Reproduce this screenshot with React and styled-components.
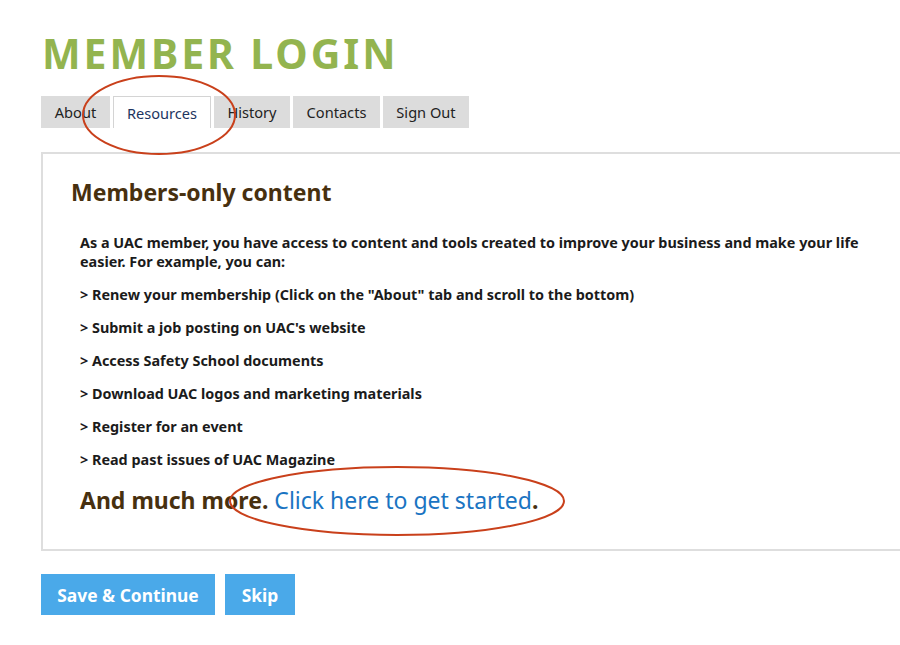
import React from 'react';
import styled, { createGlobalStyle } from 'styled-components';

const GlobalStyle = createGlobalStyle`
  html, body {
    margin: 0;
    padding: 0;
    background: #fff;
    overflow: hidden;
  }

  body {
    font-family: "Noto Sans", "Open Sans", sans-serif;
  }
`;

const Page = styled.div`
  position: relative;
  width: 900px;
  height: 645px;
  padding: 26px 0 0 41px;
  box-sizing: border-box;
  overflow: hidden;
`;

const Title = styled.h1`
  margin: 0 0 0 1px;
  font-size: 41px;
  line-height: 54px;
  font-weight: 700;
  letter-spacing: 2.9px;
  color: #93b44f;
`;

const Tabs = styled.ul`
  display: flex;
  align-items: flex-start;
  gap: 3px;
  list-style: none;
  margin: 16px 0 0;
  padding: 0;
`;

const Tab = styled.li`
  width: ${(p) => p.w}px;
  height: 32px;
  display: flex;
  align-items: center;
  justify-content: center;
  box-sizing: border-box;
  background: ${(p) => (p.active ? '#fff' : '#dcdcdc')};
  border: ${(p) => (p.active ? '1px solid #d4d4d4' : 'none')};
  border-bottom: none;
  font-size: 14.6px;
  color: ${(p) => (p.active ? '#1d3560' : '#222')};
`;

const Panel = styled.section`
  margin-top: 24px;
  width: 900px;
  height: 399px;
  border: 2px solid #dedede;
  border-right: none;
  box-sizing: border-box;
  padding: 22px 0 0 28px;
`;

const Heading = styled.h2`
  margin: 0;
  font-size: 23px;
  line-height: 32px;
  font-weight: 700;
  color: #47300f;
`;

const Body = styled.div`
  margin: 25px 0 0 9px;
  width: 800px;
  font-size: 14.4px;
  font-weight: 700;
  color: #1b1b1b;
`;

const Para = styled.p`
  margin: 0 0 14px;
  line-height: 19px;
`;

const More = styled.p`
  margin: 16px 0 0;
  font-size: 23px;
  line-height: 30px;
  font-weight: 700;
  color: #47300f;
`;

const Link = styled.a`
  font-weight: 400;
  color: #1a74c2;
  text-decoration: none;
`;

const Actions = styled.div`
  display: flex;
  gap: 10px;
  margin-top: 23px;
`;

const Button = styled.button`
  width: ${(p) => p.w}px;
  height: 41px;
  padding: 0;
  border: none;
  background: #4aa9e9;
  color: #fff;
  font-family: "Noto Sans", "Open Sans", sans-serif;
  font-size: 17.4px;
  font-weight: 700;
`;

const Marks = styled.svg`
  position: absolute;
  left: 0;
  top: 0;
  pointer-events: none;
`;

const tabs = [
  { label: 'About', w: 69 },
  { label: 'Resources', w: 98, active: true },
  { label: 'History', w: 76 },
  { label: 'Contacts', w: 87 },
  { label: 'Sign Out', w: 86 },
];

const items = [
  '> Renew your membership (Click on the "About" tab and scroll to the bottom)',
  "> Submit a job posting on UAC's website",
  '> Access Safety School documents',
  '> Download UAC logos and marketing materials',
  '> Register for an event',
  '> Read past issues of UAC Magazine',
];

const App = () => (
  <Page>
    <GlobalStyle />
    <Title>MEMBER LOGIN</Title>
    <Tabs>
      {tabs.map((t) => (
        <Tab key={t.label} w={t.w} active={t.active}>
          {t.label}
        </Tab>
      ))}
    </Tabs>
    <Panel>
      <Heading>Members-only content</Heading>
      <Body>
        <Para>
          As a UAC member, you have access to content and tools created to improve your business
          and make your life easier. For example, you can:
        </Para>
        {items.map((item) => (
          <Para key={item}>{item}</Para>
        ))}
        <More>
          And much more. <Link href="#">Click here to get started</Link>.
        </More>
      </Body>
    </Panel>
    <Actions>
      <Button w={174}>Save &amp; Continue</Button>
      <Button w={70}>Skip</Button>
    </Actions>
    <Marks width="900" height="645" viewBox="0 0 900 645">
      <ellipse cx="159" cy="115" rx="76" ry="39" fill="none" stroke="#c9401b" strokeWidth="2" />
      <ellipse cx="397" cy="501" rx="167" ry="34" fill="none" stroke="#c9401b" strokeWidth="2" />
    </Marks>
  </Page>
);

export default App;
